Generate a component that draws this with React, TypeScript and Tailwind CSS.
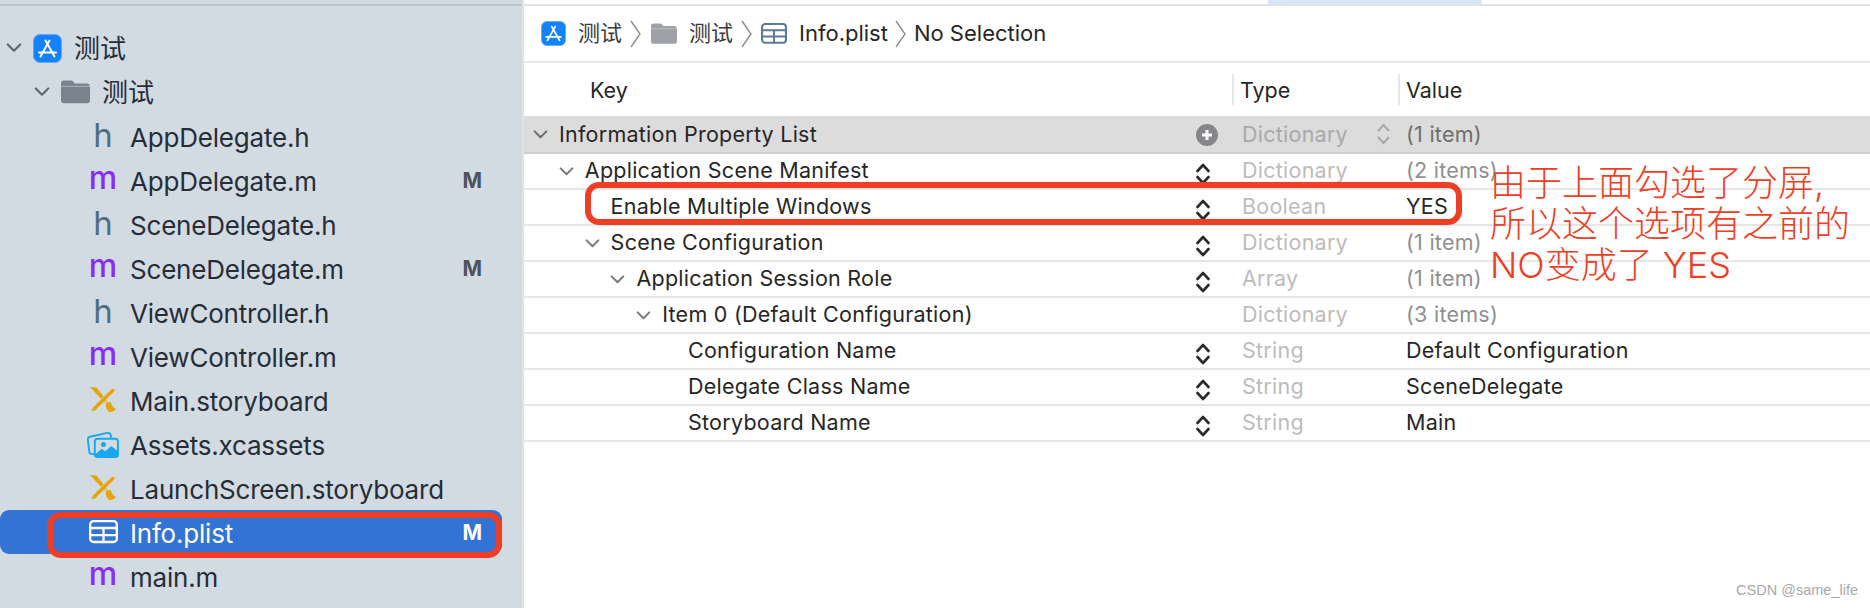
import React from "react";

const ink = "#262d37";

const Chevron = ({ color = "#5f666c", size = 16 }: { color?: string; size?: number }) => (
  <svg width={size} height={size * 0.6} viewBox="0 0 16 10" fill="none" className="shrink-0">
    <path d="M1.5 1.5 L8 8 L14.5 1.5" stroke={color} strokeWidth="2.2" strokeLinecap="round" strokeLinejoin="round" />
  </svg>
);

const AppIcon = ({ size }: { size: number }) => (
  <svg width={size} height={size} viewBox="0 0 29 29" className="shrink-0">
    <rect x="0.5" y="0.5" width="28" height="28" rx="6.5" fill="#1482fa" stroke="#62a9f5" />
    <path d="M7.5 22.5 L16.5 6.5 M21.5 22.5 L12.5 6.5 M6 18.5 H23" stroke="#fff" strokeWidth="2" strokeLinecap="round" />
  </svg>
);

const FolderIcon = ({ w, color }: { w: number; color: string }) => (
  <svg width={w} height={w * 0.8} viewBox="0 0 30 24" className="shrink-0">
    <path d="M0 3.5 Q0 0.5 3 0.5 H10 Q12 0.5 13 2 L14 3.5 H26.5 Q30 3.5 30 7 V21 Q30 24 27 24 H3 Q0 24 0 21 Z" fill={color} />
    <rect x="0" y="6" width="30" height="1.2" fill="#d3dbe2" opacity="0.5" />
  </svg>
);

const TableIcon = ({ color, w = 30 }: { color: string; w?: number }) => (
  <svg width={w} height={w * 0.8} viewBox="0 0 30 24" fill="none" className="shrink-0">
    <rect x="1.2" y="1.2" width="27.6" height="21.6" rx="3.5" stroke={color} strokeWidth="2.4" />
    <path d="M1 8.3 H29 M1 15.6 H29 M15 8.3 V23" stroke={color} strokeWidth="2.4" />
  </svg>
);

const StoryboardIcon = () => (
  <svg width="26" height="26" viewBox="0 0 26 26" className="shrink-0">
    <path d="M0 0 L6.5 0.5 L17 14 L15 16 Z" fill="#e5a30c" />
    <path d="M22.5 1 L25.5 3.5 L5.5 23.5 L1 25 L2.5 20.5 Z" fill="#e5a30c" stroke="#d3dbe2" strokeWidth="0.8" />
    <path d="M16 16.5 Q18 14 21 15.5 Q22.5 21 25.8 21.5 Q24 25.5 19 24.8 Q15 22 16 16.5 Z" fill="#e5a30c" />
  </svg>
);

const AssetsIcon = () => (
  <svg width="32" height="27" viewBox="0 0 33 28" fill="none" className="shrink-0">
    <path d="M8 24 L5 24 Q2.5 24 2.2 21 L0.8 9 Q0.6 6.5 3 6 L21 2 Q24 1.5 24.5 4.5 L25 7" stroke="#17a8ef" strokeWidth="2" />
    <rect x="8" y="8" width="24" height="19" rx="3" stroke="#17a8ef" strokeWidth="2" />
    <circle cx="17" cy="14" r="2.6" fill="#17a8ef" />
    <path d="M8 25 L15 18.5 L19 21 L25 15.5 L32 21 V25 Q32 27.5 29 27.5 H11 Q8 27.5 8 25 Z" fill="#17a8ef" />
  </svg>
);

const Stepper = () => (
  <svg width="14" height="22" viewBox="0 0 14 22" fill="none" className="mt-[6px]">
    <path d="M1.5 8 L7 2 L12.5 8 M1.5 14 L7 20 L12.5 14" stroke="#2b2b2b" strokeWidth="2.6" strokeLinecap="round" strokeLinejoin="round" />
  </svg>
);

const PlusCircle = () => (
  <svg width="22" height="22" viewBox="0 0 22 22" className="mt-[2px]">
    <circle cx="11" cy="11" r="11" fill="#86868a" />
    <path d="M11 6 V16 M6 11 H16" stroke="#fff" strokeWidth="3" />
  </svg>
);

const Crumb = () => (
  <svg width="11" height="28" viewBox="0 0 11 28" fill="none" className="shrink-0">
    <path d="M1 1 L10 14 L1 27" stroke="#8d8d8d" strokeWidth="1.4" />
  </svg>
);

type FileRow = { name: string; kind: "h" | "m" | "sb" | "assets" | "plist"; flag?: boolean };

const files: FileRow[] = [
  { name: "AppDelegate.h", kind: "h" },
  { name: "AppDelegate.m", kind: "m", flag: true },
  { name: "SceneDelegate.h", kind: "h" },
  { name: "SceneDelegate.m", kind: "m", flag: true },
  { name: "ViewController.h", kind: "h" },
  { name: "ViewController.m", kind: "m" },
  { name: "Main.storyboard", kind: "sb" },
  { name: "Assets.xcassets", kind: "assets" },
  { name: "LaunchScreen.storyboard", kind: "sb" },
  { name: "Info.plist", kind: "plist", flag: true },
  { name: "main.m", kind: "m" },
];

const FileGlyph = ({ kind }: { kind: FileRow["kind"] }) => {
  if (kind === "h") return <span className="text-[33px] text-[#4f6d83] leading-none -mt-[2px]">h</span>;
  if (kind === "m") return <span className="text-[32px] font-medium text-[#8a2df2] leading-none -mt-[5px]">m</span>;
  if (kind === "sb") return <StoryboardIcon />;
  if (kind === "assets") return <AssetsIcon />;
  return <TableIcon color="#ffffff" w={29} />;
};

const Sidebar = () => (
  <div className="w-[524px] shrink-0 h-full bg-[#d3dbe2] border-r-2 border-[#dfe4e9] relative">
    <div className="h-[4px]" />
    <div className="h-[2px] bg-[#bcc5cc]" />
    <div className="pt-[20px]">
      <div className="h-[44px] flex items-center pl-[6px]">
        <Chevron />
        <div className="ml-[11px]"><AppIcon size={29} /></div>
        <span className="ml-[12px] pt-[1px] text-[26px]" style={{ color: ink }}>测试</span>
      </div>
      <div className="h-[44px] flex items-center pl-[34px]">
        <Chevron />
        <div className="ml-[11px]"><FolderIcon w={29} color="#79838d" /></div>
        <span className="ml-[12px] text-[26px]" style={{ color: ink }}>测试</span>
      </div>
      {files.map((f) => {
        const on = f.kind === "plist";
        return (
          <div
            key={f.name}
            className={`h-[44px] w-[502px] flex items-center rounded-[9px] ${on ? "bg-[#3373d4] text-white" : "text-[#262d37]"}`}
          >
            <div className="w-[130px] pl-[80px] pr-[4px] flex justify-center items-center">
              <FileGlyph kind={f.kind} />
            </div>
            <span className="pt-[2px] text-[26px] tracking-[-0.2px]">{f.name}</span>
            {f.flag && (
              <span className={`ml-auto mr-[20px] pt-[1px] text-[21px] font-bold ${on ? "text-white" : "text-[#4c535b]"}`}>M</span>
            )}
          </div>
        );
      })}
    </div>
    <div className="absolute left-[47px] top-[512px] w-[455px] h-[46px] rounded-[14px] border-[6px] border-[#ee3f26]" />
  </div>
);

type PlistRow = { key: string; level: number; open?: boolean; type: string; value: string; dark?: boolean; stepper?: boolean };

const rows: PlistRow[] = [
  { key: "Application Scene Manifest", level: 1, open: true, type: "Dictionary", value: "(2 items)", stepper: true },
  { key: "Enable Multiple Windows", level: 2, type: "Boolean", value: "YES", dark: true, stepper: true },
  { key: "Scene Configuration", level: 2, open: true, type: "Dictionary", value: "(1 item)", stepper: true },
  { key: "Application Session Role", level: 3, open: true, type: "Array", value: "(1 item)", stepper: true },
  { key: "Item 0 (Default Configuration)", level: 4, open: true, type: "Dictionary", value: "(3 items)" },
  { key: "Configuration Name", level: 5, type: "String", value: "Default Configuration", dark: true, stepper: true },
  { key: "Delegate Class Name", level: 5, type: "String", value: "SceneDelegate", dark: true, stepper: true },
  { key: "Storyboard Name", level: 5, type: "String", value: "Main", dark: true, stepper: true },
];

const KeyCell = ({ row }: { row: PlistRow }) => (
  <div className="w-[708px] shrink-0 flex items-center">
    <div className="flex items-center" style={{ paddingLeft: 9 + row.level * 25.8 }}>
      <div className="w-[26px] shrink-0">{row.open && <Chevron color="#77797b" size={15} />}</div>
      <span className="pb-[1px] text-[21.5px] text-[#262626] tracking-[0.25px]">{row.key}</span>
    </div>
    <div className="ml-auto w-[36px] shrink-0 h-[22px] flex items-center">{row.stepper && <Stepper />}</div>
  </div>
);

const PlistTable = () => (
  <div>
    <div className="h-[38px] flex items-center bg-[#dcdcdc] border-b-2 border-[#cfcfcf]">
      <div className="w-[708px] shrink-0 flex items-center pl-[9px]">
        <div className="w-[26px] shrink-0"><Chevron color="#6c6c6c" size={15} /></div>
        <span className="pt-[1px] text-[21.5px] text-[#262626] tracking-[0.25px]">Information Property List</span>
        <div className="ml-auto w-[36px] shrink-0"><PlusCircle /></div>
      </div>
      <div className="w-[166px] shrink-0 flex items-center pl-[10px] text-[21.5px] tracking-[0.25px] text-[#a9a9a9]">
        Dictionary
        <svg width="15" height="22" viewBox="0 0 15 22" fill="none" className="ml-auto mr-[7px]">
          <path d="M2 8 L7.5 2 L13 8 M2 14 L7.5 20 L13 14" stroke="#a8a8a8" strokeWidth="2" />
        </svg>
      </div>
      <div className="pl-[8px] pt-[1px] text-[21.5px] tracking-[0.25px] text-[#6e6e6e]">(1 item)</div>
    </div>
    {rows.map((row) => (
      <div key={row.key} className="h-[36px] flex items-center border-b-2 border-[#e6e6e6]">
        <KeyCell row={row} />
        <div className="w-[166px] shrink-0 pl-[10px] pb-[1px] text-[21.5px] tracking-[0.25px] text-[#bcbcbc]">{row.type}</div>
        <div className={`pl-[8px] pb-[1px] text-[21.5px] tracking-[0.25px] ${row.dark ? "text-[#262626]" : "text-[#8f8f8f]"}`}>{row.value}</div>
      </div>
    ))}
  </div>
);

const Detail = () => (
  <div className="flex-1 h-full bg-white relative">
    <div className="h-[4px] pl-[744px]"><div className="w-[214px] h-full bg-[#d6e6f8]" /></div>
    <div className="h-[2px] bg-[#e2e2e2]" />
    <div className="h-[55px] flex items-center pl-[17px] text-[22px] text-[#262626]">
      <AppIcon size={25} />
      <span className="ml-[12px] text-[#3a3a3a]">测试</span>
      <div className="ml-[8px]"><Crumb /></div>
      <div className="ml-[10px]"><FolderIcon w={26} color="#9ea2a6" /></div>
      <span className="ml-[12px] text-[#3a3a3a]">测试</span>
      <div className="ml-[8px]"><Crumb /></div>
      <div className="ml-[9px]"><TableIcon color="#5c7a90" w={26} /></div>
      <span className="ml-[12px]">Info.plist</span>
      <div className="ml-[7px]"><Crumb /></div>
      <span className="ml-[8px]">No Selection</span>
    </div>
    <div className="h-[2px] bg-[#e6e6e6]" />
    <div className="h-[53px] flex items-center text-[21.5px] text-[#262626]">
      <div className="w-[708px] shrink-0 pl-[66px] pt-[2px]">Key</div>
      <div className="w-[166px] shrink-0 h-[31px] border-l-2 border-[#e6e6e6] pl-[6px] pt-[2px] flex items-center">Type</div>
      <div className="h-[31px] border-l-2 border-[#e6e6e6] pl-[6px] pt-[2px] flex items-center">Value</div>
    </div>
    <PlistTable />
    <div className="absolute left-[61px] top-[182px] w-[877px] h-[43px] rounded-[14px] border-[6px] border-[#ee3f26]" />
    <div className="absolute left-[966px] top-[163px] text-[36px] leading-[41px] text-[#ee3f26] font-light whitespace-nowrap">
      <div className="h-[41px]">由于上面勾选了分屏,</div>
      <div className="h-[41px]">所以这个选项有之前的</div>
      <div className="h-[41px]">NO变成了 YES</div>
    </div>
    <div className="absolute right-[12px] bottom-[6px] text-[14.5px] text-[#a8a8a8] [font-family:'Liberation_Sans',sans-serif]">
      CSDN @same_life
    </div>
  </div>
);

export default function App() {
  return (
    <div className="w-[1870px] h-[608px] flex overflow-hidden bg-white [font-family:Inter,'Noto_Sans_CJK_SC',sans-serif]">
      <Sidebar />
      <Detail />
    </div>
  );
}
